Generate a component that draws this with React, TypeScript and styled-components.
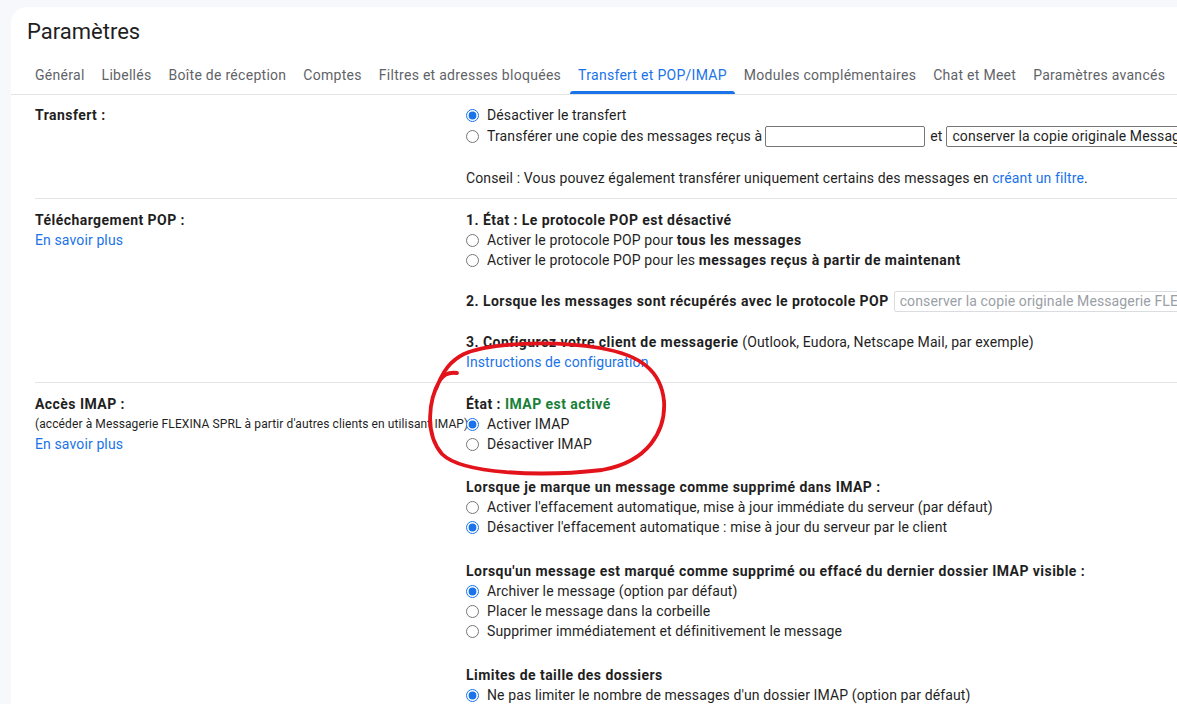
import React from 'react';
import styled, { createGlobalStyle } from 'styled-components';

const GlobalStyle = createGlobalStyle`
  html, body {
    margin: 0;
    padding: 0;
    background: #f6f8fc;
    overflow: hidden;
  }
  body {
    font-family: Roboto, "Liberation Sans", Arial, sans-serif;
    color: #1f1f1f;
  }
`;

const Page = styled.div`
  position: relative;
  width: 1177px;
  height: 704px;
  box-sizing: border-box;
  padding: 7px 0 0 11px;
  overflow: hidden;
`;

const Card = styled.div`
  width: 1320px;
  min-height: 740px;
  background: #fff;
  border-radius: 16px 16px 0 0;
`;

const Title = styled.h1`
  margin: 0;
  padding: 11px 0 0 16px;
  font-size: 22px;
  line-height: 28px;
  font-weight: 400;
  color: #1f1f1f;
`;

const Tabs = styled.nav`
  display: flex;
  margin-top: 10px;
  padding-left: 15.5px;
  border-bottom: 1px solid #e3e3e3;
`;

const Tab = styled.div<{ $active?: boolean }>`
  position: relative;
  height: 38px;
  display: flex;
  align-items: center;
  padding: 0 8.5px;
  font-size: 14px;
  letter-spacing: 0.28px;
  white-space: nowrap;
  color: ${(p) => (p.$active ? '#1a73e8' : '#5f6368')};
  &::after {
    content: '';
    display: ${(p) => (p.$active ? 'block' : 'none')};
    position: absolute;
    left: 0;
    right: 0;
    bottom: 0;
    height: 3px;
    border-radius: 3px 3px 0 0;
    background: #1a73e8;
  }
`;

const Section = styled.section<{ $last?: boolean; $top?: number }>`
  display: grid;
  grid-template-columns: 431px 1fr;
  margin-left: 24px;
  padding: ${(p) => p.$top ?? 11}px 0 10px;
  border-bottom: ${(p) => (p.$last ? 'none' : '1px solid #e3e3e3')};
  font-size: 14px;
  line-height: 20px;
  letter-spacing: 0.12px;
`;

const LabelCol = styled.div`
  display: flex;
  flex-direction: column;
  white-space: nowrap;
`;

const Label = styled.div`
  height: 20px;
  font-weight: 700;
  letter-spacing: 0.45px;
  color: #1f1f1f;
`;

const Note = styled.div`
  height: 20px;
  font-size: 12px;
  line-height: 20px;
  letter-spacing: 0.1px;
  color: #1f1f1f;
`;

const Link = styled.a`
  color: #1a73e8;
  text-decoration: none;
  cursor: pointer;
`;

const Body = styled.div`
  display: flex;
  flex-direction: column;
  white-space: nowrap;
`;

const Group = styled.div<{ $space?: number }>`
  display: flex;
  flex-direction: column;
  margin-top: ${(p) => p.$space ?? 0}px;
`;

const Line = styled.div<{ $tall?: boolean }>`
  display: flex;
  align-items: center;
  height: ${(p) => (p.$tall ? 22 : 20)}px;
  white-space: nowrap;
`;

const Heading = styled.span`
  font-weight: 700;
  letter-spacing: 0.45px;
`;

const Green = styled.span`
  color: #188038;
  font-weight: 700;
`;

const Radio = styled.input.attrs({ type: 'radio' })`
  width: 13px;
  height: 13px;
  margin: 0 8px 0 0;
  accent-color: #1a73e8;
  flex: none;
`;

const TextBox = styled.input`
  box-sizing: border-box;
  width: 160px;
  height: 21px;
  margin: 0 5px 0 3px;
  border: 1px solid #767676;
  border-radius: 2px;
  font: inherit;
`;

const Select = styled.div<{ $disabled?: boolean }>`
  box-sizing: border-box;
  width: 460px;
  height: 21px;
  margin-left: ${(p) => (p.$disabled ? 5 : 4)}px;
  padding: 0 5px;
  display: flex;
  align-items: center;
  border: 1px solid ${(p) => (p.$disabled ? '#dadce0' : '#767676')};
  border-radius: 2px;
  font-weight: 400;
  letter-spacing: 0.12px;
  color: ${(p) => (p.$disabled ? '#9aa0a6' : '#1f1f1f')};
  overflow: hidden;
`;

const Scribble = styled.svg`
  position: absolute;
  left: 0;
  top: 0;
  width: 1177px;
  height: 704px;
  pointer-events: none;
`;

const tabs = [
  'Général',
  'Libellés',
  'Boîte de réception',
  'Comptes',
  'Filtres et adresses bloquées',
  'Transfert et POP/IMAP',
  'Modules complémentaires',
  'Chat et Meet',
  'Paramètres avancés',
];

const Option = ({ checked, children }: { checked?: boolean; children: React.ReactNode }) => (
  <Line>
    <Radio defaultChecked={checked} readOnly />
    <span>{children}</span>
  </Line>
);

export default function App() {
  return (
    <>
      <GlobalStyle />
      <Page>
        <Card>
          <Title>Paramètres</Title>
          <Tabs>
            {tabs.map((t) => (
              <Tab key={t} $active={t === 'Transfert et POP/IMAP'}>
                {t}
              </Tab>
            ))}
          </Tabs>

          <Section $top={10}>
            <LabelCol>
              <Label>Transfert :</Label>
            </LabelCol>
            <Body>
              <Group>
                <Line>
                  <Radio name="fwd" defaultChecked />
                  <span>Désactiver le transfert</span>
                </Line>
                <Line $tall>
                  <Radio name="fwd" />
                  <span>Transférer une copie des messages reçus à</span>
                  <TextBox />
                  <span>et</span>
                  <Select>
                    conserver la copie originale Messagerie FLEXINA SPRL dans la boîte de réception
                  </Select>
                </Line>
              </Group>
              <Group $space={21}>
                <Line>
                  Conseil : Vous pouvez également transférer uniquement certains des messages en&nbsp;
                  <Link>créant un filtre</Link>.
                </Line>
              </Group>
            </Body>
          </Section>

          <Section>
            <LabelCol>
              <Label>Téléchargement POP :</Label>
              <Link>En savoir plus</Link>
            </LabelCol>
            <Body>
              <Group>
                <Line>
                  <Heading>1. État : Le protocole POP est désactivé</Heading>
                </Line>
                <Option>
                  Activer le protocole POP pour <Heading>tous les messages</Heading>
                </Option>
                <Option>
                  Activer le protocole POP pour les{' '}
                  <Heading>messages reçus à partir de maintenant</Heading>
                </Option>
              </Group>
              <Group $space={21}>
                <Line>
                  <Heading>2. Lorsque les messages sont récupérés avec le protocole POP</Heading>
                  <Select $disabled>
                    conserver la copie originale Messagerie FLEXINA SPRL dans la boîte de réception
                  </Select>
                </Line>
              </Group>
              <Group $space={21}>
                <Line>
                  <Heading>3. Configurez votre client de messagerie</Heading>
                  &nbsp;(Outlook, Eudora, Netscape Mail, par exemple)
                </Line>
                <Line>
                  <Link>Instructions de configuration</Link>
                </Line>
              </Group>
            </Body>
          </Section>

          <Section $last>
            <LabelCol>
              <Label>Accès IMAP :</Label>
              <Note>
                (accéder à Messagerie FLEXINA SPRL à partir d'autres clients en utilisant IMAP)
              </Note>
              <Link>En savoir plus</Link>
            </LabelCol>
            <Body>
              <Group>
                <Line>
                  <Heading>
                    État : <Green>IMAP est activé</Green>
                  </Heading>
                </Line>
                <Option checked>Activer IMAP</Option>
                <Option>Désactiver IMAP</Option>
              </Group>
              <Group $space={23}>
                <Line>
                  <Heading>Lorsque je marque un message comme supprimé dans IMAP :</Heading>
                </Line>
                <Option>
                  Activer l'effacement automatique, mise à jour immédiate du serveur (par défaut)
                </Option>
                <Option checked>
                  Désactiver l'effacement automatique : mise à jour du serveur par le client
                </Option>
              </Group>
              <Group $space={24}>
                <Line>
                  <Heading>
                    Lorsqu'un message est marqué comme supprimé ou effacé du dernier dossier IMAP
                    visible :
                  </Heading>
                </Line>
                <Option checked>Archiver le message (option par défaut)</Option>
                <Option>Placer le message dans la corbeille</Option>
                <Option>Supprimer immédiatement et définitivement le message</Option>
              </Group>
              <Group $space={24}>
                <Line>
                  <Heading>Limites de taille des dossiers</Heading>
                </Line>
                <Option checked>
                  Ne pas limiter le nombre de messages d'un dossier IMAP (option par défaut)
                </Option>
                <Option>Limiter le nombre de messages d'un dossier IMAP à 1 000</Option>
              </Group>
            </Body>
          </Section>
        </Card>

        <Scribble viewBox="0 0 1177 704">
          <g fill="none" stroke="#e3131b" strokeWidth={3.8} strokeLinecap="round" strokeLinejoin="round">
            <path d="M440 380 C429 399 424 433 442 454 C462 474 540 477 602 470 C648 462 666 431 664 401 C661 371 641 355 600 348 C550 340 490 343 464 354 C450 361 443 371 436 389" />
            <path d="M457 373 C450 372 444 374 440 380" />
          </g>
        </Scribble>
      </Page>
    </>
  );
}
